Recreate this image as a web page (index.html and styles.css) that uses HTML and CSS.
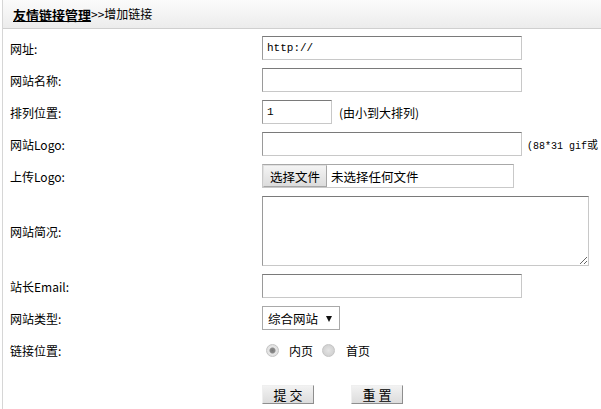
FILE: index.html
```html
<!DOCTYPE html>
<html lang="zh-CN">
<head>
<meta charset="utf-8">
<title>增加链接</title>
<link rel="stylesheet" href="styles.css">
</head>
<body>
<div class="page">
  <div class="head"><a class="crumb" href="#">友情链接管理</a><span class="sep">&gt;&gt;增加链接</span></div>
  <form class="form">
    <label class="lbl">网址:</label>
    <div class="val"><input class="txt wide mono" type="text" value="http://"></div>

    <label class="lbl">网站名称:</label>
    <div class="val"><input class="txt wide" type="text"></div>

    <label class="lbl">排列位置:</label>
    <div class="val"><input class="txt short mono" type="text" value="1"><span class="note">(由小到大排列)</span></div>

    <label class="lbl">网站Logo:</label>
    <div class="val"><input class="txt wide" type="text"><span class="note2"><span class="en">(88*31 gif</span>或</span></div>

    <label class="lbl">上传Logo:</label>
    <div class="val"><div class="file"><span class="file-btn">选择文件</span><span class="file-name">未选择任何文件</span></div></div>

    <label class="lbl">网站简况:</label>
    <div class="val"><textarea class="area"></textarea></div>

    <label class="lbl">站长Email:</label>
    <div class="val"><input class="txt wide" type="text"></div>

    <label class="lbl">网站类型:</label>
    <div class="val"><span class="sel-wrap"><select class="sel"><option>综合网站</option></select></span></div>

    <label class="lbl">链接位置:</label>
    <div class="val radios">
      <input class="radio" type="radio" name="pos" checked><span class="rtxt">内页</span>
      <input class="radio" type="radio" name="pos"><span class="rtxt">首页</span>
    </div>

    <div class="lbl"></div>
    <div class="val btns"><button class="btn" type="button">提 交</button><button class="btn" type="button">重 置</button></div>
  </form>
</div>
</body>
</html>
```

FILE: styles.css
```css
html, body {
  margin: 0;
  padding: 0;
  background: #fff;
  overflow: hidden;
}
body {
  font-family: "Noto Sans CJK SC", "Liberation Sans", sans-serif;
  font-size: 12px;
  color: #000;
}
.page {
  margin-left: 2px;
  border-left: 1px solid #d6d6d6;
  min-height: 409px;
}
.head {
  height: 28px;
  border-bottom: 1px solid #cfcfcf;
  background: linear-gradient(#fbfbfb, #ececec);
  display: flex;
  align-items: center;
  padding-left: 10px;
  line-height: 1;
}
.crumb {
  color: #000;
  font-weight: bold;
  font-size: 13px;
  text-decoration: underline;
}
.sep {
  font-size: 12px;
}
.form {
  display: grid;
  grid-template-columns: 252px 1fr;
  row-gap: 8px;
  padding: 7px 0 0 7px;
  margin: 0;
}
.lbl {
  display: flex;
  align-items: center;
  font-size: 12px;
  white-space: nowrap;
}
.val {
  display: flex;
  align-items: center;
  white-space: nowrap;
  min-height: 24px;
}
.txt {
  box-sizing: border-box;
  height: 24px;
  margin: 0;
  padding: 0 4px;
  border: 1px solid;
  border-color: #7a7a7a #c8c8c8 #c8c8c8 #9a9a9a;
  background: #fff;
  outline: none;
  font-family: "Noto Sans CJK SC", sans-serif;
  font-size: 12px;
}
.mono {
  font-family: "Liberation Mono", monospace;
  font-size: 11px;
}
.wide { width: 260px; }
.short { width: 70px; }
.note { margin-left: 7px; }
.note2 {
  margin-left: 5px;
  font-size: 11px;
}
.note2 .en {
  font-family: "Liberation Mono", monospace;
  font-size: 10px;
}
.file {
  box-sizing: border-box;
  width: 252px;
  height: 24px;
  border: 1px solid #c9c9c9;
  border-top-color: #a8a8a8;
  display: flex;
  align-items: stretch;
  font-size: 12.5px;
}
.file-btn {
  box-sizing: border-box;
  width: 64px;
  display: flex;
  align-items: center;
  justify-content: center;
  background: linear-gradient(#f4f4f4, #dcdcdc);
  border: 1px solid #a6a6a6;
  border-top-color: #e0e0e0;
  border-left-color: #e0e0e0;
}
.file-name {
  display: flex;
  align-items: center;
  padding-left: 4px;
}
.area {
  box-sizing: border-box;
  width: 327px;
  height: 70px;
  margin: 0;
  border: 1px solid;
  border-color: #7a7a7a #c8c8c8 #c8c8c8 #9a9a9a;
  outline: none;
  font-family: "Noto Sans CJK SC", sans-serif;
}
.sel-wrap {
  position: relative;
  display: inline-block;
}
.sel-wrap::after {
  content: "";
  position: absolute;
  right: 8px;
  top: 10px;
  border-left: 3.5px solid transparent;
  border-right: 3.5px solid transparent;
  border-top: 6px solid #111;
  pointer-events: none;
}
.sel {
  -webkit-appearance: none;
  appearance: none;
  box-sizing: border-box;
  width: 78px;
  height: 24px;
  margin: 0;
  padding: 0 0 0 5px;
  border: 1px solid #a9a9a9;
  border-radius: 0;
  background: #fff;
  font-family: "Noto Sans CJK SC", sans-serif;
  font-size: 12.5px;
  color: #000;
  outline: none;
}
.radios {
  height: 24px;
}
.radio {
  -webkit-appearance: none;
  appearance: none;
  box-sizing: border-box;
  width: 13px;
  height: 13px;
  margin: 0 0 0 4px;
  border-radius: 50%;
  border: 1px solid #c4c4c4;
  background: radial-gradient(circle, #e4e4e4 0, #d2d2d2 70%);
}
.radio:checked {
  background: radial-gradient(circle, #7a7a7a 0, #8c8c8c 2.5px, #e6e6e6 3.5px, #dadada 100%);
}
.radio + .rtxt { margin-left: 10px; }
.rtxt + .radio { margin-left: 9px; }
.rtxt:last-child { margin-left: 11px; }
.btns {
  margin-top: 15px;
  align-items: flex-start;
  gap: 37px;
}
.btn {
  box-sizing: border-box;
  width: 52px;
  height: 19px;
  margin: 0;
  padding: 0;
  border: 1px solid;
  border-color: #efefef #8e8e8e #8e8e8e #efefef;
  background: linear-gradient(#f2f2f2, #dcdcdc);
  font-family: "Noto Sans CJK SC", sans-serif;
  font-size: 13px;
  line-height: 17px;
  color: #000;
}
```
